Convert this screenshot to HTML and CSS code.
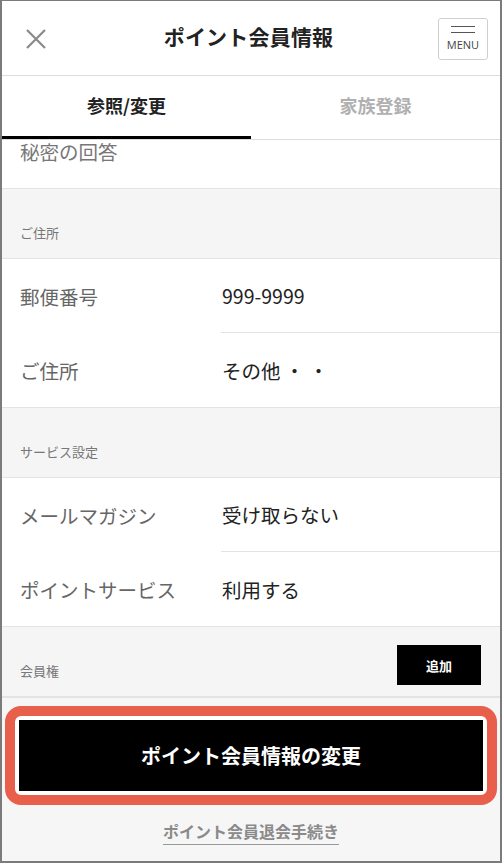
FILE: index.html
```html
<!DOCTYPE html>
<html lang="ja">
<head>
  <meta charset="UTF-8" />
  <title>ポイント会員情報</title>
  <link rel="stylesheet" href="styles.css">
</head>
<body>
  <div class="frame">
    <header class="header">
      <button class="close" type="button" aria-label="閉じる">
        <svg width="20" height="20" viewBox="0 0 20 20">
          <path d="M1 1 L19 19 M19 1 L1 19" stroke="#8a8a8a" stroke-width="2.2" fill="none" />
        </svg>
      </button>
      <h1 class="title">ポイント会員情報</h1>
      <button class="menu" type="button">
        <span class="menu-line"></span>
        <span class="menu-line"></span>
        <span class="menu-text">MENU</span>
      </button>
    </header>

    <nav class="tabs">
      <div class="tab active">参照/変更</div>
      <div class="tab">家族登録</div>
    </nav>

    <div class="list">
      <div class="row cut">
        <div class="label light">秘密の回答</div>
        <div class="value"></div>
      </div>

      <div class="section">ご住所</div>
      <div class="row inset">
        <div class="label">郵便番号</div>
        <div class="value">999-9999</div>
      </div>
      <div class="row">
        <div class="label">ご住所</div>
        <div class="value">その他 ・ ・</div>
      </div>

      <div class="section">サービス設定</div>
      <div class="row inset">
        <div class="label">メールマガジン</div>
        <div class="value">受け取らない</div>
      </div>
      <div class="row">
        <div class="label">ポイントサービス</div>
        <div class="value">利用する</div>
      </div>

      <div class="section with-btn">
        <span>会員権</span>
        <button class="add" type="button">追加</button>
      </div>
    </div>

    <div class="footer">
      <div class="highlight">
        <button class="submit" type="button">ポイント会員情報の変更</button>
      </div>
      <a class="leave" href="#">ポイント会員退会手続き</a>
    </div>
  </div>
</body>
</html>
```

FILE: styles.css
```css
html, body {
  margin: 0;
  padding: 0;
}
body {
  font-family: "Noto Sans CJK JP", "Noto Sans", sans-serif;
  color: #222;
  background: #fff;
}
.frame {
  width: 502px;
  height: 863px;
  box-sizing: border-box;
  border: 2px solid #7b7b7b;
  border-top-width: 1px;
  background: #fff;
  display: flex;
  flex-direction: column;
  overflow: hidden;
}

/* header */
.header {
  height: 74px;
  border-bottom: 1px solid #ddd;
  display: flex;
  align-items: center;
  justify-content: space-between;
  padding: 0 12px 0 23px;
  flex-shrink: 0;
}
.close {
  width: 22px;
  height: 22px;
  padding: 0;
  border: none;
  background: none;
  display: flex;
  align-items: center;
  justify-content: center;
  margin-top: 1px;
}
.title {
  margin: 0 0 4px 12px;
  font-size: 21px;
  font-weight: bold;
  color: #222;
  letter-spacing: 0.2px;
}
.menu {
  width: 50px;
  height: 42px;
  box-sizing: border-box;
  border: 1px solid #cfcfcf;
  border-radius: 3px;
  background: #fff;
  padding: 6px 0 0;
  display: flex;
  flex-direction: column;
  align-items: center;
  margin-top: 1px;
}
.menu-line {
  width: 24px;
  height: 1px;
  background: #555;
  margin-top: 1px;
}
.menu-line + .menu-line {
  margin-top: 5px;
}
.menu-text {
  font-family: "Open Sans", "Liberation Sans", sans-serif;
  font-size: 11px;
  color: #444;
  margin-top: 6px;
  line-height: 12px;
}

/* tabs */
.tabs {
  display: flex;
  height: 63px;
  border-bottom: 1px solid #ddd;
  flex-shrink: 0;
}
.tab {
  flex: 1;
  display: flex;
  align-items: center;
  justify-content: center;
  font-size: 18px;
  font-weight: bold;
  color: #b0b0b0;
  box-sizing: border-box;
  padding-bottom: 6px;
}
.tab.active {
  color: #222;
  border-bottom: 3px solid #000;
  padding-bottom: 3px;
}

/* list */
.list {
  overflow: hidden;
  flex-shrink: 0;
}
.row {
  display: grid;
  grid-template-columns: 219px 1fr;
  height: 74px;
  box-sizing: border-box;
}
.row.cut {
  height: 48px;
}
.row.cut .label {
  align-items: flex-start;
  padding-top: 1px;
  line-height: 22px;
}
.row .label,
.row .value {
  display: flex;
  align-items: center;
  font-size: 19.5px;
}
.label {
  padding-left: 18px;
  color: #666;
}
.label.light {
  color: #777;
}
.value {
  padding-left: 1px;
  color: #222;
}
.row.inset .value {
  border-bottom: 1px solid #e3e3e3;
}
.section {
  height: 71px;
  box-sizing: border-box;
  background: #f5f5f5;
  border-top: 1px solid #e3e3e3;
  border-bottom: 1px solid #e3e3e3;
  display: flex;
  align-items: flex-end;
  padding: 0 0 16px 18px;
  font-size: 13px;
  color: #777;
}
.section.with-btn {
  justify-content: space-between;
  align-items: flex-end;
  padding: 0 19px 16px 18px;
  height: 72px;
  border-bottom-width: 2px;
}
.add {
  width: 84px;
  height: 40px;
  border: none;
  background: #000;
  color: #fff;
  font-family: inherit;
  font-size: 13px;
  font-weight: bold;
  margin-bottom: -6px;
  align-self: flex-start;
  margin-top: 18px;
}

/* footer */
.footer {
  flex: 1;
  background: #f6f6f6;
  display: flex;
  flex-direction: column;
  align-items: center;
  padding-top: 8px;
}
.highlight {
  width: 492px;
  box-sizing: border-box;
  border: 10px solid #e8604c;
  border-radius: 16px;
  background: #fff;
  padding: 4px;
}
.submit {
  display: block;
  width: 100%;
  height: 71px;
  border: none;
  background: #000;
  color: #fff;
  font-family: inherit;
  font-size: 20px;
  font-weight: bold;
}
.leave {
  margin-top: 13px;
  font-size: 16px;
  font-weight: bold;
  color: #8a8a8a;
  text-decoration: none;
  border-bottom: 1.5px solid #999;
  line-height: 26px;
}
```
